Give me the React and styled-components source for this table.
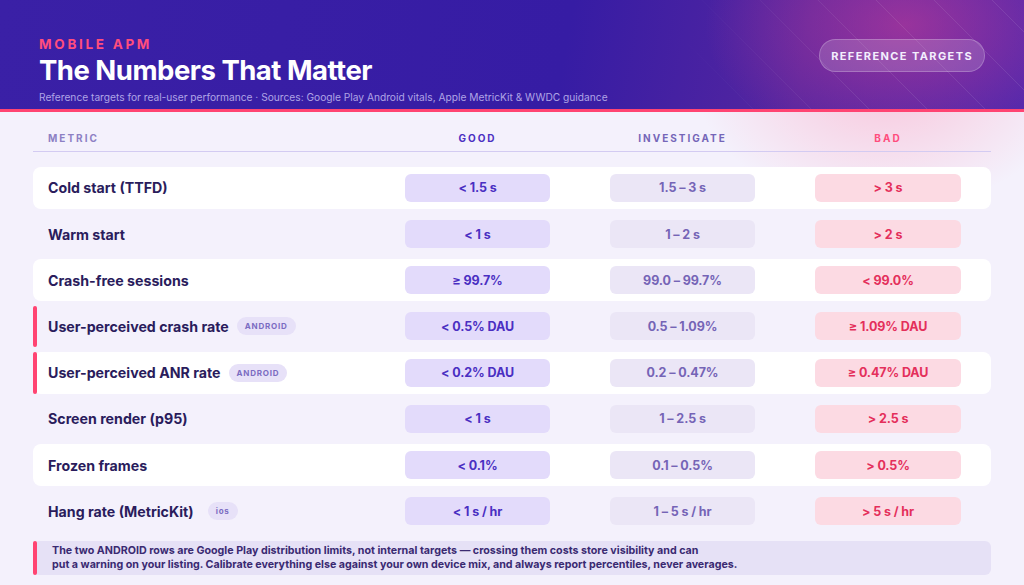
import React from "react";
import styled, { createGlobalStyle, css } from "styled-components";

const GlobalStyle = createGlobalStyle`
  * { box-sizing: border-box; }
  html, body { margin: 0; padding: 0; }
  body {
    font-family: Inter, "Noto Sans", "Liberation Sans", sans-serif;
    background: #f4f1fc;
    -webkit-font-smoothing: antialiased;
  }
`;

const rows = [
  { name: "Cold start (TTFD)", good: "< 1.5 s", mid: "1.5 – 3 s", bad: "> 3 s" },
  { name: "Warm start", good: "< 1 s", mid: "1 – 2 s", bad: "> 2 s" },
  { name: "Crash-free sessions", good: "≥ 99.7%", mid: "99.0 – 99.7%", bad: "< 99.0%" },
  { name: "User-perceived crash rate", tag: "ANDROID", flag: true, good: "< 0.5% DAU", mid: "0.5 – 1.09%", bad: "≥ 1.09% DAU" },
  { name: "User-perceived ANR rate", tag: "ANDROID", flag: true, good: "< 0.2% DAU", mid: "0.2 – 0.47%", bad: "≥ 0.47% DAU" },
  { name: "Screen render (p95)", good: "< 1 s", mid: "1 – 2.5 s", bad: "> 2.5 s" },
  { name: "Frozen frames", good: "< 0.1%", mid: "0.1 – 0.5%", bad: "> 0.5%" },
  { name: "Hang rate (MetricKit)", tag: "ios", wide: true, good: "< 1 s / hr", mid: "1 – 5 s / hr", bad: "> 5 s / hr" },
];

const Page = styled.div`
  width: 1024px;
  height: 585px;
  overflow: hidden;
  display: flex;
  flex-direction: column;
  background:
    radial-gradient(ellipse 190px 130px at 885px 80px, rgba(255, 140, 175, 0.42), rgba(255, 140, 175, 0) 100%),
    #f4f1fc;
`;

/* --- header --- */
const Header = styled.header`
  position: relative;
  height: 112px;
  flex-shrink: 0;
  padding: 36px 39px 0 39px;
  display: flex;
  justify-content: space-between;
  align-items: flex-start;
  border-bottom: 3px solid #ff4472;
  background:
    radial-gradient(ellipse 200px 130px at 905px 25px, rgba(200, 60, 150, 0.6), rgba(200, 60, 150, 0) 100%),
    linear-gradient(100deg, #3a20a6 0%, #361ca4 55%, #5526a0 78%, #4d27ad 100%);
  overflow: hidden;

  &::after {
    content: "";
    position: absolute;
    inset: 0;
    pointer-events: none;
    background: repeating-linear-gradient(
      45deg,
      rgba(255, 255, 255, 0) 0px,
      rgba(255, 255, 255, 0) 40px,
      rgba(255, 255, 255, 0.09) 40px,
      rgba(255, 255, 255, 0.09) 41px
    );
    -webkit-mask-image: linear-gradient(90deg, transparent 0%, transparent 66%, #000 85%);
    mask-image: linear-gradient(90deg, transparent 0%, transparent 66%, #000 85%);
  }
`;

const TitleBlock = styled.div`
  display: flex;
  flex-direction: column;
`;

const Eyebrow = styled.div`
  font-size: 13.5px;
  line-height: 16px;
  font-weight: 700;
  letter-spacing: 2.7px;
  color: #ff4d7d;
`;

const Title = styled.h1`
  margin: 0;
  font-size: 27.5px;
  line-height: 36px;
  font-weight: 700;
  letter-spacing: -0.5px;
  color: #ffffff;
`;

const Subtitle = styled.div`
  margin-top: 2px;
  font-size: 10.2px;
  line-height: 14px;
  color: #b0a4e6;
`;

const Chip = styled.div`
  position: relative;
  z-index: 1;
  margin-top: 3px;
  height: 33px;
  padding: 0 11px;
  display: flex;
  align-items: center;
  border-radius: 17px;
  background: rgba(255, 255, 255, 0.16);
  border: 1px solid rgba(255, 255, 255, 0.22);
  color: #f3eefe;
  font-size: 11px;
  font-weight: 700;
  letter-spacing: 1.4px;
`;

/* --- table --- */
const Body = styled.main`
  flex: 1;
  padding: 0 33px;
  display: flex;
  flex-direction: column;
`;

const gridCols = css`
  display: grid;
  grid-template-columns: 1fr 145px 145px 146px;
  column-gap: 60px;
  padding: 0 30px 0 15px;
  align-items: center;
`;

const HeadRow = styled.div`
  ${gridCols};
  height: 40px;
  padding-top: 13px;
  border-bottom: 1px solid #d3cbf2;
`;

const HeadCell = styled.div`
  font-size: 10px;
  font-weight: 700;
  letter-spacing: 2px;
  text-align: ${(p) => (p.$left ? "left" : "center")};
  color: ${(p) => p.$color};
`;

const Rows = styled.div`
  margin-top: 15px;
  display: flex;
  flex-direction: column;
  gap: 4.4px;
`;

const Row = styled.div`
  ${gridCols};
  position: relative;
  height: 41.8px;
  border-radius: 8px;
  background: ${(p) => (p.$white ? "#ffffff" : "transparent")};

  ${(p) =>
    p.$flag &&
    css`
      &::before {
        content: "";
        position: absolute;
        left: 0;
        top: 0;
        bottom: 0;
        width: 3.5px;
        border-radius: 2px;
        background: #ff4472;
      }
    `}
`;

const Name = styled.div`
  display: flex;
  align-items: center;
  gap: ${(p) => (p.$wide ? "14px" : "8px")};
  font-size: 14.2px;
  font-weight: 700;
  color: #2a1c5c;
  white-space: nowrap;
`;

const Tag = styled.span`
  height: 18px;
  padding: 0 8px;
  display: inline-flex;
  align-items: center;
  border-radius: 9px;
  background: #e7e1f8;
  color: #7b6cc2;
  font-size: 8px;
  font-weight: 700;
  letter-spacing: 0.8px;
`;

const tones = {
  good: { bg: "#e3dbfb", fg: "#4a2fc2" },
  mid: { bg: "#ebe6f6", fg: "#7564b6" },
  bad: { bg: "#fcdae3", fg: "#e42f5b" },
};

const Pill = styled.div`
  height: 28px;
  display: flex;
  align-items: center;
  justify-content: center;
  border-radius: 6px;
  background: ${(p) => tones[p.$tone].bg};
  color: ${(p) => tones[p.$tone].fg};
  font-size: 12.5px;
  font-weight: 700;
  letter-spacing: -0.1px;
`;

const Note = styled.div`
  position: relative;
  margin-top: 9px;
  padding: 3px 20px 3px 19px;
  border-radius: 6px;
  background: #e6e1f6;
  color: #3a2a72;
  font-size: 10.7px;
  line-height: 14px;
  font-weight: 700;

  &::before {
    content: "";
    position: absolute;
    left: 0;
    top: 0;
    bottom: 0;
    width: 3.5px;
    border-radius: 2px;
    background: #ff4472;
  }
`;

export default function App() {
  return (
    <Page>
      <GlobalStyle />
      <Header>
        <TitleBlock>
          <Eyebrow>MOBILE APM</Eyebrow>
          <Title>The Numbers That Matter</Title>
          <Subtitle>
            Reference targets for real-user performance · Sources: Google Play Android vitals, Apple MetricKit &amp; WWDC guidance
          </Subtitle>
        </TitleBlock>
        <Chip>REFERENCE TARGETS</Chip>
      </Header>

      <Body>
        <HeadRow>
          <HeadCell $left $color="#8d80c4">METRIC</HeadCell>
          <HeadCell $color="#4b2fc2">GOOD</HeadCell>
          <HeadCell $color="#7566b8">INVESTIGATE</HeadCell>
          <HeadCell $color="#ff4d7d">BAD</HeadCell>
        </HeadRow>

        <Rows>
          {rows.map((r, i) => (
            <Row key={r.name} $white={i % 2 === 0} $flag={r.flag}>
              <Name $wide={r.wide}>
                {r.name}
                {r.tag && <Tag>{r.tag}</Tag>}
              </Name>
              <Pill $tone="good">{r.good}</Pill>
              <Pill $tone="mid">{r.mid}</Pill>
              <Pill $tone="bad">{r.bad}</Pill>
            </Row>
          ))}
        </Rows>

        <Note>
          The two ANDROID rows are Google Play distribution limits, not internal targets — crossing them costs store visibility and can
          <br />
          put a warning on your listing. Calibrate everything else against your own device mix, and always report percentiles, never averages.
        </Note>
      </Body>
    </Page>
  );
}
